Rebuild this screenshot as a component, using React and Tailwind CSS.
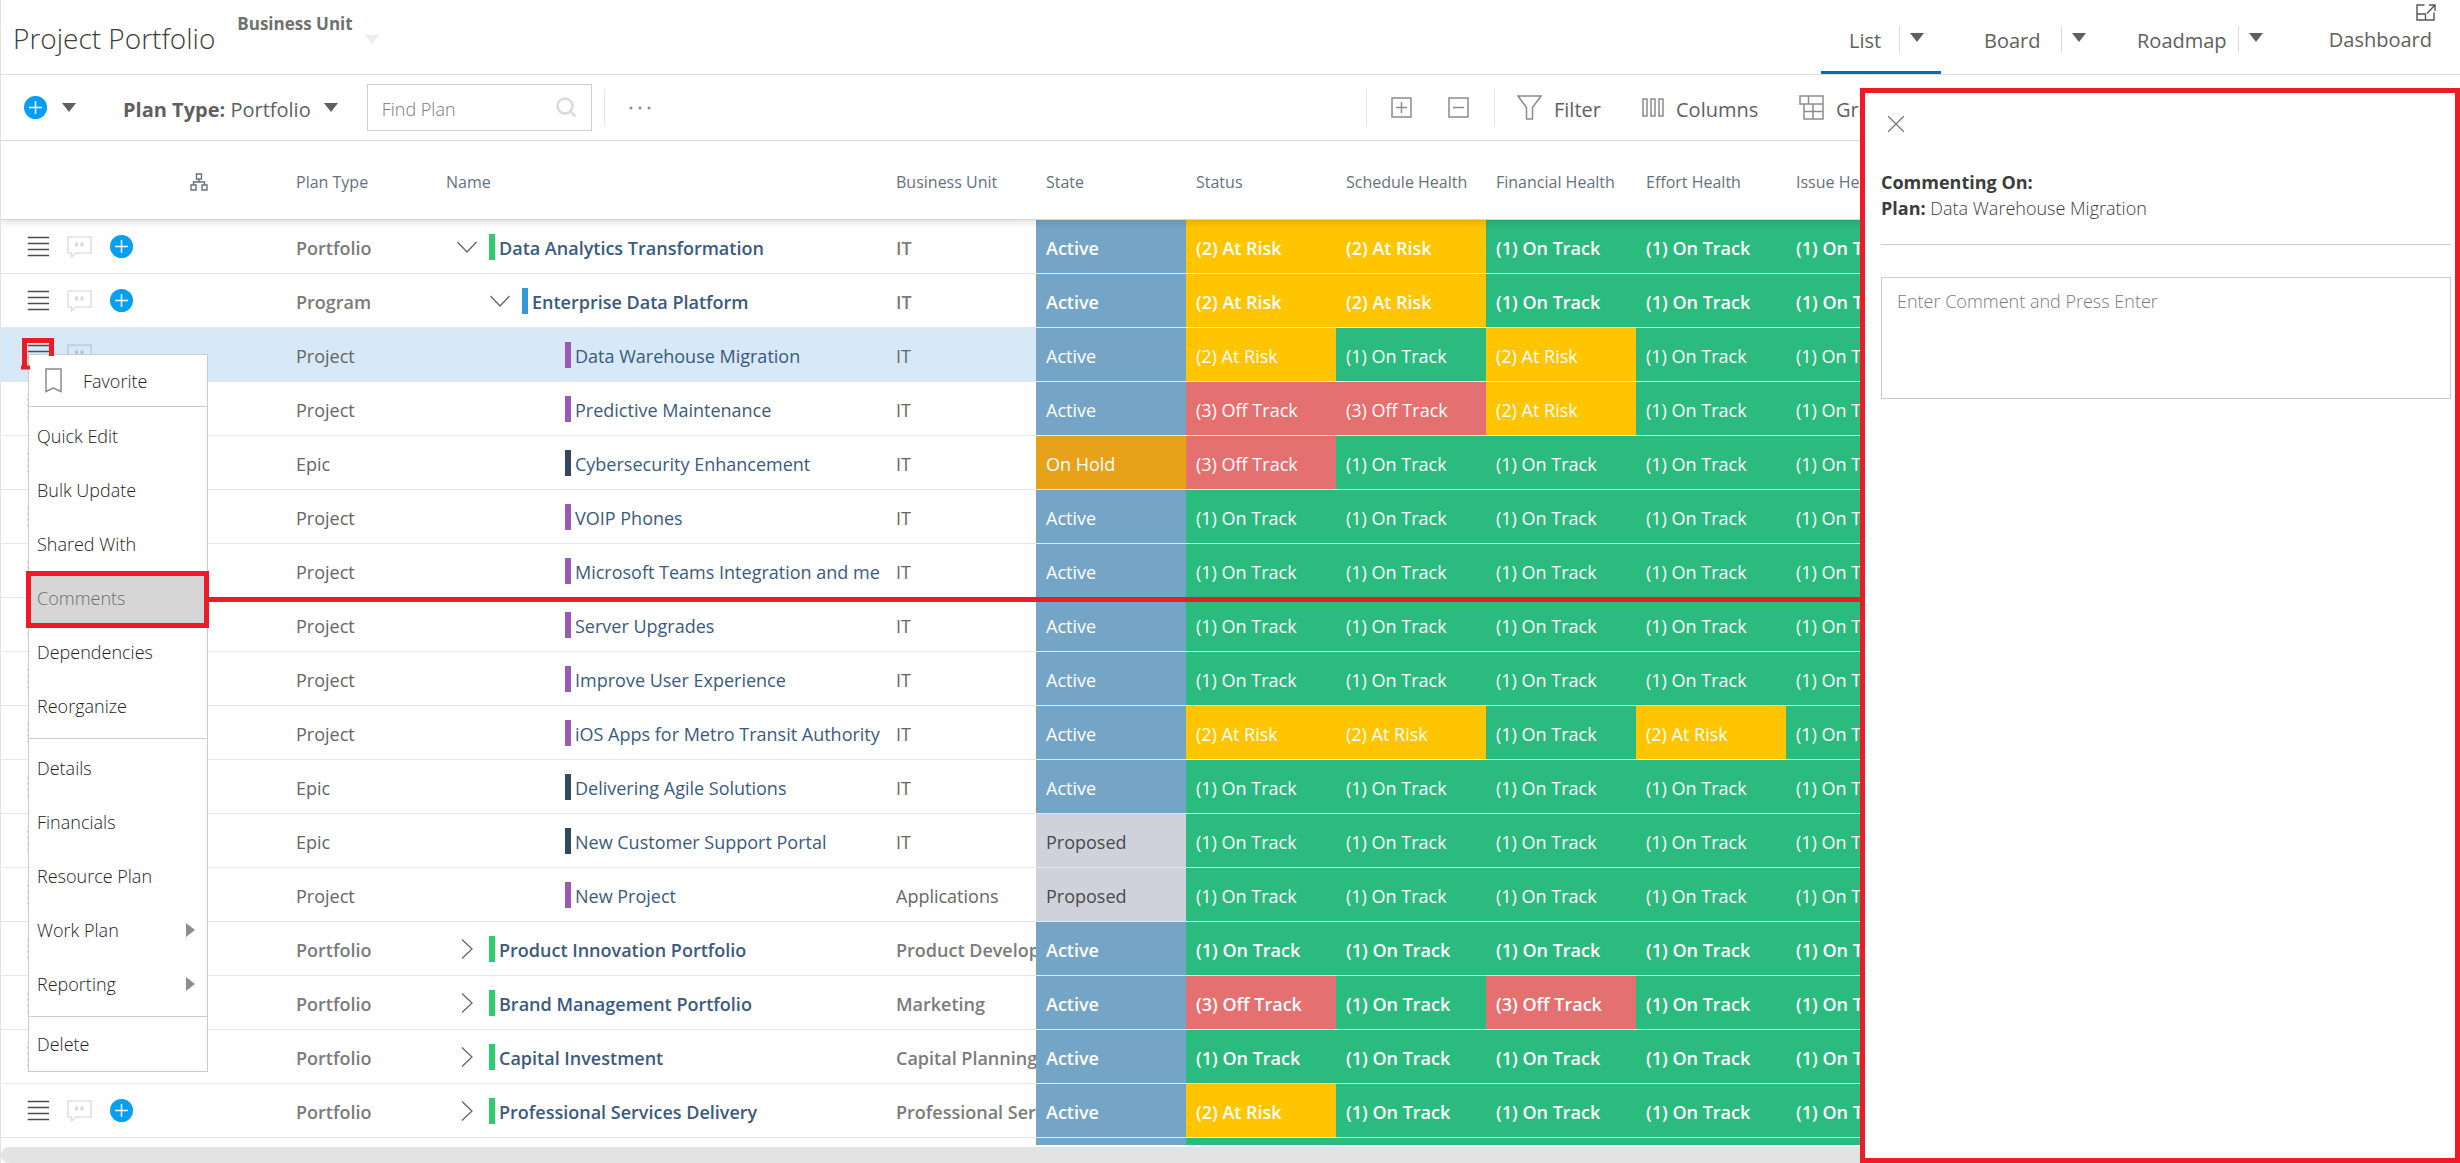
import React from 'react'

const TONES = {
  active: 'bg-[#75a5c6] text-white',
  hold: 'bg-[#e8a21a] text-white',
  proposed: 'bg-[#cfd2da] text-[#4a4a4a]',
  1: 'bg-[#2bbb7f] text-white',
  2: 'bg-[#ffc500] text-white',
  3: 'bg-[#e57070] text-white',
}

const HEALTH = { 1: '(1) On Track', 2: '(2) At Risk', 3: '(3) Off Track' }
const STATE = { active: 'Active', hold: 'On Hold', proposed: 'Proposed' }

const BARS = {
  Portfolio: 'bg-[#2ecc71]',
  Program: 'bg-[#3498db]',
  Project: 'bg-[#9b59b6]',
  Epic: 'bg-[#34495e]',
}

const PLANS = [
  { type: 'Portfolio', name: 'Data Analytics Transformation', unit: 'IT', state: 'active', health: [2, 2, 1, 1, 1], open: true },
  { type: 'Program', name: 'Enterprise Data Platform', unit: 'IT', state: 'active', health: [2, 2, 1, 1, 1], open: true },
  { type: 'Project', name: 'Data Warehouse Migration', unit: 'IT', state: 'active', health: [2, 1, 2, 1, 1], selected: true },
  { type: 'Project', name: 'Predictive Maintenance', unit: 'IT', state: 'active', health: [3, 3, 2, 1, 1] },
  { type: 'Epic', name: 'Cybersecurity Enhancement', unit: 'IT', state: 'hold', health: [3, 1, 1, 1, 1] },
  { type: 'Project', name: 'VOIP Phones', unit: 'IT', state: 'active', health: [1, 1, 1, 1, 1] },
  { type: 'Project', name: 'Microsoft Teams Integration and me', unit: 'IT', state: 'active', health: [1, 1, 1, 1, 1] },
  { type: 'Project', name: 'Server Upgrades', unit: 'IT', state: 'active', health: [1, 1, 1, 1, 1] },
  { type: 'Project', name: 'Improve User Experience', unit: 'IT', state: 'active', health: [1, 1, 1, 1, 1] },
  { type: 'Project', name: 'iOS Apps for Metro Transit Authority', unit: 'IT', state: 'active', health: [2, 2, 1, 2, 1] },
  { type: 'Epic', name: 'Delivering Agile Solutions', unit: 'IT', state: 'active', health: [1, 1, 1, 1, 1] },
  { type: 'Epic', name: 'New Customer Support Portal', unit: 'IT', state: 'proposed', health: [1, 1, 1, 1, 1] },
  { type: 'Project', name: 'New Project', unit: 'Applications', state: 'proposed', health: [1, 1, 1, 1, 1] },
  { type: 'Portfolio', name: 'Product Innovation Portfolio', unit: 'Product Develop', state: 'active', health: [1, 1, 1, 1, 1] },
  { type: 'Portfolio', name: 'Brand Management Portfolio', unit: 'Marketing', state: 'active', health: [3, 1, 3, 1, 1] },
  { type: 'Portfolio', name: 'Capital Investment', unit: 'Capital Planning', state: 'active', health: [1, 1, 1, 1, 1] },
  { type: 'Portfolio', name: 'Professional Services Delivery', unit: 'Professional Ser', state: 'active', health: [2, 1, 1, 1, 1] },
]

const COLUMNS = ['Plan Type', 'Name', 'Business Unit', 'State', 'Status', 'Schedule Health', 'Financial Health', 'Effort Health', 'Issue Health']

function Caret({ className = 'text-[#5f5f5f]' }) {
  return (
    <svg className={'shrink-0 ' + className} width="14" height="9" viewBox="0 0 14 9" fill="currentColor">
      <path d="M0 0h14L7 9z" />
    </svg>
  )
}

function PlusCircle() {
  return (
    <svg width="23" height="23" viewBox="0 0 23 23">
      <circle cx="11.5" cy="11.5" r="11.5" fill="#039ff3" />
      <path d="M11.5 5v13M5 11.5h13" stroke="#fff" strokeWidth="1.5" />
    </svg>
  )
}

function MenuLines() {
  return (
    <svg width="22" height="21" viewBox="0 0 22 21">
      <path d="M.7 1.5H22M.7 7.5H22M.7 13.5H22M.7 19.5H22" stroke="#4d4d4d" strokeWidth="1.4" />
    </svg>
  )
}

function Bubble() {
  return (
    <svg width="25" height="22" viewBox="0 0 25 22" fill="none">
      <path d="M1 1h23v16H9l-4.500 4V17H1z" stroke="#000" strokeOpacity=".13" strokeWidth="1.500" />
      <path d="M9.500 6.500v4M15 6.500v4" stroke="#000" strokeOpacity=".15" strokeWidth="3" />
    </svg>
  )
}

function Chevron({ open }) {
  return (
    <svg width="20" height="20" viewBox="0 0 20 20" fill="none" stroke="#666" strokeWidth="1.300">
      {open ? <path d="M.5 5l9.500 10L19.500 5" /> : <path d="M5 .5L15 10 5 19.500" />}
    </svg>
  )
}

function ViewTab({ label, active, className, labelWidth }) {
  return (
    <div className={'flex h-[74px] items-center border-b-[3px] pt-[7px] pr-[17px] ' + (active ? 'border-[#0270ad] ' : 'border-transparent ') + className}>
      <button className={'pt-[3px] text-left text-[20px] leading-6 ' + labelWidth}>{label}</button>
      <span className="h-[27px] w-px bg-[#dcdcdc]" />
      <button aria-label={label + ' views'} className="ml-[10px] pb-1"><Caret /></button>
    </div>
  )
}

function Header() {
  return (
    <header className="flex h-[75px] items-start border-b border-[#dedede] pl-3">
      <h1 className="pt-5 text-[28px] leading-9 font-light text-[#3c3c3c]">Project Portfolio</h1>
      <button className="ml-[22px] flex items-start pt-3 text-[17px] leading-6 font-bold text-[#707070]">
        Business Unit
        <Caret className="mt-[23px] ml-3 text-[#ececec]" />
      </button>
      <nav className="ml-auto flex text-[#5f5f5f]">
        <ViewTab label="List" active className="pl-7" labelWidth="w-[50px]" />
        <ViewTab label="Board" className="pl-[43px]" labelWidth="w-[77px]" />
        <ViewTab label="Roadmap" className="pl-[34px]" labelWidth="w-[101px]" />
        <div className="flex w-[180px] flex-col items-end pt-1 pr-6">
          <button aria-label="Open in new window">
            <svg width="20" height="17" viewBox="0 0 20 17" fill="none" stroke="#555" strokeWidth="1.400">
              <path d="M8.500 1H1v15h17V8.500M1 10h8.500v6M11 9.500l7.500-8M13 1h6v6" />
            </svg>
          </button>
          <button className="mt-[5px] mr-1 text-[20px] leading-7">Dashboard</button>
        </div>
      </nav>
    </header>
  )
}

function Toolbar() {
  return (
    <div className="flex h-[66px] items-center border-b border-[#d6d6d6] pl-[23px] text-[20px] leading-7 text-[#5f5f5f]">
      <button className="flex items-center gap-[15px]" aria-label="Add plan">
        <PlusCircle />
        <Caret />
      </button>
      <button className="ml-[47px] flex items-center gap-[13px]">
        <span className="pt-1"><b>Plan Type:</b> Portfolio</span>
        <Caret />
      </button>
      <label className="ml-[29px] flex h-[47px] w-[225px] items-center border border-[#cfcfcf] pr-[14px] pl-[14px]">
        <input type="text" aria-label="Find Plan" placeholder="Find Plan" className="w-full min-w-0 pt-[2px] text-[18px] font-light outline-none placeholder:text-[#7a7a7a]" />
        <svg className="shrink-0" width="21" height="21" viewBox="0 0 21 21" fill="none" stroke="#dadada" strokeWidth="2.500">
          <circle cx="9" cy="9" r="7.500" />
          <path d="M14.500 14.500l5 5" />
        </svg>
      </label>
      <span className="ml-3 h-[37px] w-px bg-[#e6e6e6]" />
      <button className="ml-6" aria-label="More">
        <svg width="22" height="4" viewBox="0 0 22 4" fill="#8a8a8a">
          <circle cx="2" cy="2" r="1.500" /><circle cx="11" cy="2" r="1.500" /><circle cx="20" cy="2" r="1.500" />
        </svg>
      </button>
      <div className="ml-auto flex w-[1094px] items-center">
        <span className="h-[37px] w-px bg-[#e6e6e6]" />
        <button className="ml-6" aria-label="Expand all">
          <svg width="21" height="21" viewBox="0 0 21 21" fill="none" stroke="#8c8c8c" strokeWidth="1.500">
            <path d="M1 1h19v19H1zM10.500 5v11M5 10.500h11" />
          </svg>
        </button>
        <button className="ml-9" aria-label="Collapse all">
          <svg width="21" height="21" viewBox="0 0 21 21" fill="none" stroke="#8c8c8c" strokeWidth="1.500">
            <path d="M1 1h19v19H1zM5 10.500h11" />
          </svg>
        </button>
        <span className="ml-[25px] h-[37px] w-px bg-[#e6e6e6]" />
        <button className="ml-[22px] flex w-[125px] items-center gap-3">
          <svg width="25" height="25" viewBox="0 0 25 25" fill="none" stroke="#8c8c8c" strokeWidth="1.500">
            <path d="M1 1h23l-8.500 11.500V24h-6V12.500z" />
          </svg>
          <span className="pt-1">Filter</span>
        </button>
        <button className="flex w-[157px] items-center gap-3">
          <svg width="22" height="19" viewBox="0 0 22 19" fill="none" stroke="#8c8c8c" strokeWidth="1.500">
            <path d="M1 1h4v17H1zM9 1h4v17H9zM17 1h4v17h-4z" />
          </svg>
          <span className="pt-1">Columns</span>
        </button>
        <button className="flex items-center gap-3">
          <svg width="25" height="25" viewBox="0 0 25 25" fill="none" stroke="#8c8c8c" strokeWidth="1.500">
            <path d="M1 1h23v23H5V9H1zM5 9h19M9.500 1v8M14 9v15M5 16.500h19" />
          </svg>
          <span className="pt-1">Group</span>
        </button>
      </div>
    </div>
  )
}

function PlanRow({ plan }) {
  const parent = plan.type === 'Portfolio' || plan.type === 'Program'
  const cell = 'h-[54px] overflow-hidden border-b border-[#e7e7e7] pt-[2px] pl-[10px] whitespace-nowrap '
  const indent = plan.type === 'Portfolio' ? 'pl-[11px]' : plan.type === 'Program' ? 'pl-11' : 'pl-[119px]'
  return (
    <tr className={(plan.selected ? 'bg-[#d7e8f6] ' : '') + (parent ? 'font-semibold' : '')}>
      <td className="h-[54px] border-b border-[#e7e7e7] p-0 pl-[26px]">
        <div className="flex items-center">
          <button aria-label={'Open menu for ' + plan.name}><MenuLines /></button>
          <button className="ml-[18px] pt-px" aria-label="Comments"><Bubble /></button>
          {parent && <button className="ml-[18px]" aria-label="Add child"><PlusCircle /></button>}
        </div>
      </td>
      <td className={cell + (parent ? 'text-[#7b7b7b]' : 'text-[#666]')}>{plan.type}</td>
      <td className="h-[54px] overflow-hidden border-b border-[#e7e7e7] p-0 pl-[10px]">
        <div className={'flex items-center ' + indent}>
          {parent && <button className="mr-[12px]" aria-label="Toggle"><Chevron open={plan.open} /></button>}
          <span className={'h-[26px] w-[6px] shrink-0 ' + BARS[plan.type]} />
          <a href="#plan" className="ml-1 pt-[2px] whitespace-nowrap text-[#3a5a80]">{plan.name}</a>
        </div>
      </td>
      <td className={cell + (parent ? 'text-[#7b7b7b]' : 'text-[#666]')}>{plan.unit}</td>
      <td className={cell + TONES[plan.state]}>{STATE[plan.state]}</td>
      {plan.health.map((h, i) => (
        <td key={i} className={cell + TONES[h]}>{HEALTH[h]}</td>
      ))}
    </tr>
  )
}

function PlanTable() {
  return (
    <table className="w-full table-fixed border-separate border-spacing-0 text-left text-[18px] leading-6">
      <colgroup>
        <col className="w-[285px]" />
        <col className="w-[150px]" />
        <col className="w-[450px]" />
        <col className="w-[150px]" />
        <col className="w-[150px]" />
        <col className="w-[150px]" />
        <col className="w-[150px]" />
        <col className="w-[150px]" />
        <col className="w-[150px]" />
        <col />
      </colgroup>
      <thead className="relative z-10 bg-white text-[16px] text-[#66717c] shadow-[0_2px_8px_rgba(0,0,0,0.15)]">
        <tr>
          <th className="h-[79px] border-b border-[#d6d6d6] p-0 pt-1 pl-[189px]" aria-label="Hierarchy">
            <svg width="18" height="18" viewBox="0 0 18 18" fill="none" stroke="#66717c" strokeWidth="1.400">
              <path d="M6.500 1h5v5h-5zM1 12h5v5H1zM12 12h5v5h-5zM9 6v3M3.500 12V9h11v3" />
            </svg>
          </th>
          {COLUMNS.map((c) => (
            <th key={c} className="h-[79px] border-b border-[#d6d6d6] px-[10px] pt-[3px] font-normal whitespace-nowrap">{c}</th>
          ))}
        </tr>
      </thead>
      <tbody>
        {PLANS.map((p) => <PlanRow key={p.name} plan={p} />)}
        <tr>
          <td colSpan={4} className="h-[54px]" />
          <td className={TONES.active} />
          <td colSpan={5} className={TONES[1]} />
        </tr>
      </tbody>
    </table>
  )
}

function MenuItem({ label, submenu, marked }) {
  return (
    <li>
      <button className={'relative flex h-[54px] w-full items-center justify-between pr-3 pl-2 ' + (marked ? 'bg-[#d6d6d6] text-[#6e6e6e]' : '')}>
        {label}
        {submenu && (
          <svg width="9" height="14" viewBox="0 0 9 14" fill="#8c8c8c"><path d="M0 0l9 7-9 7z" /></svg>
        )}
        {marked && <span className="absolute top-0 -right-[2px] -bottom-[3px] -left-[3px] border-[5px] border-[#ed1c24]" />}
      </button>
    </li>
  )
}

function ContextMenu() {
  return (
    <div className="absolute top-[354px] left-[27px] z-20 w-[180px] border border-[#cccccc] bg-white text-[18px] leading-6 font-light text-[#222]">
      <button className="flex h-[52px] w-full items-center gap-[21px] border-b border-[#cccccc] pl-4">
        <svg width="17" height="25" viewBox="0 0 17 25" fill="none" stroke="#8c8c8c" strokeWidth="1.500">
          <path d="M1 1h15v22.500L8.500 20 1 23.500z" />
        </svg>
        Favorite
      </button>
      <ul className="border-b border-[#cccccc] pt-[2px] pb-[5px]">
        <MenuItem label="Quick Edit" />
        <MenuItem label="Bulk Update" />
        <MenuItem label="Shared With" />
        <MenuItem label="Comments" marked />
        <MenuItem label="Dependencies" />
        <MenuItem label="Reorganize" />
      </ul>
      <ul className="border-b border-[#cccccc] pt-[2px] pb-[5px]">
        <MenuItem label="Details" />
        <MenuItem label="Financials" />
        <MenuItem label="Resource Plan" />
        <MenuItem label="Work Plan" submenu />
        <MenuItem label="Reporting" submenu />
      </ul>
      <ul>
        <MenuItem label="Delete" />
      </ul>
    </div>
  )
}

function CommentPanel() {
  return (
    <aside className="absolute top-[88px] right-0 bottom-0 z-30 w-[600px] border-[5px] border-[#ed1c24] bg-white pr-1 pl-4 text-[18px] leading-[26px] text-[#3c3c3c]">
      <button className="mt-[23px] ml-[7px] block" aria-label="Close">
        <svg width="16" height="16" viewBox="0 0 16 16" stroke="#777" strokeWidth="1.300"><path d="M0 0l16 16M16 0L0 16" /></svg>
      </button>
      <div className="mt-[37px] border-b border-[#cccccc] pb-[23px]">
        <p className="font-bold">Commenting On:</p>
        <p className="font-light"><span className="font-bold">Plan:</span> Data Warehouse Migration</p>
      </div>
      <textarea
        aria-label="Comment"
        placeholder="Enter Comment and Press Enter"
        className="mt-8 block h-[122px] w-full resize-none border border-[#cccccc] px-[15px] py-[10px] font-light outline-none placeholder:text-[#7a7a7a]"
      />
    </aside>
  )
}

export default function App() {
  return (
    <div className="relative flex h-screen flex-col overflow-hidden border-l border-[#e2e2e2] bg-white font-['Open_Sans','Noto_Sans',sans-serif]">
      <Header />
      <Toolbar />
      <main className="min-h-0 flex-1 overflow-hidden">
        <PlanTable />
      </main>
      <div className="mt-[2px] h-4 shrink-0 rounded-l-full bg-[#e3e3e3]" />
      <ContextMenu />
      {/* callout marks: row menu corner and the line to the comment panel */}
      <svg className="absolute top-[338px] left-5 z-20" width="36" height="34" viewBox="0 0 36 34" fill="none" stroke="#ed1c24" strokeWidth="5">
        <path d="M30.500 18V2.500H3.500V31" />
        <path d="M0 29.500h9" strokeWidth="4" />
      </svg>
      <div className="absolute top-[597px] right-[600px] left-[206px] z-20 h-[5px] bg-[#ed1c24]" />
      <CommentPanel />
    </div>
  )
}
